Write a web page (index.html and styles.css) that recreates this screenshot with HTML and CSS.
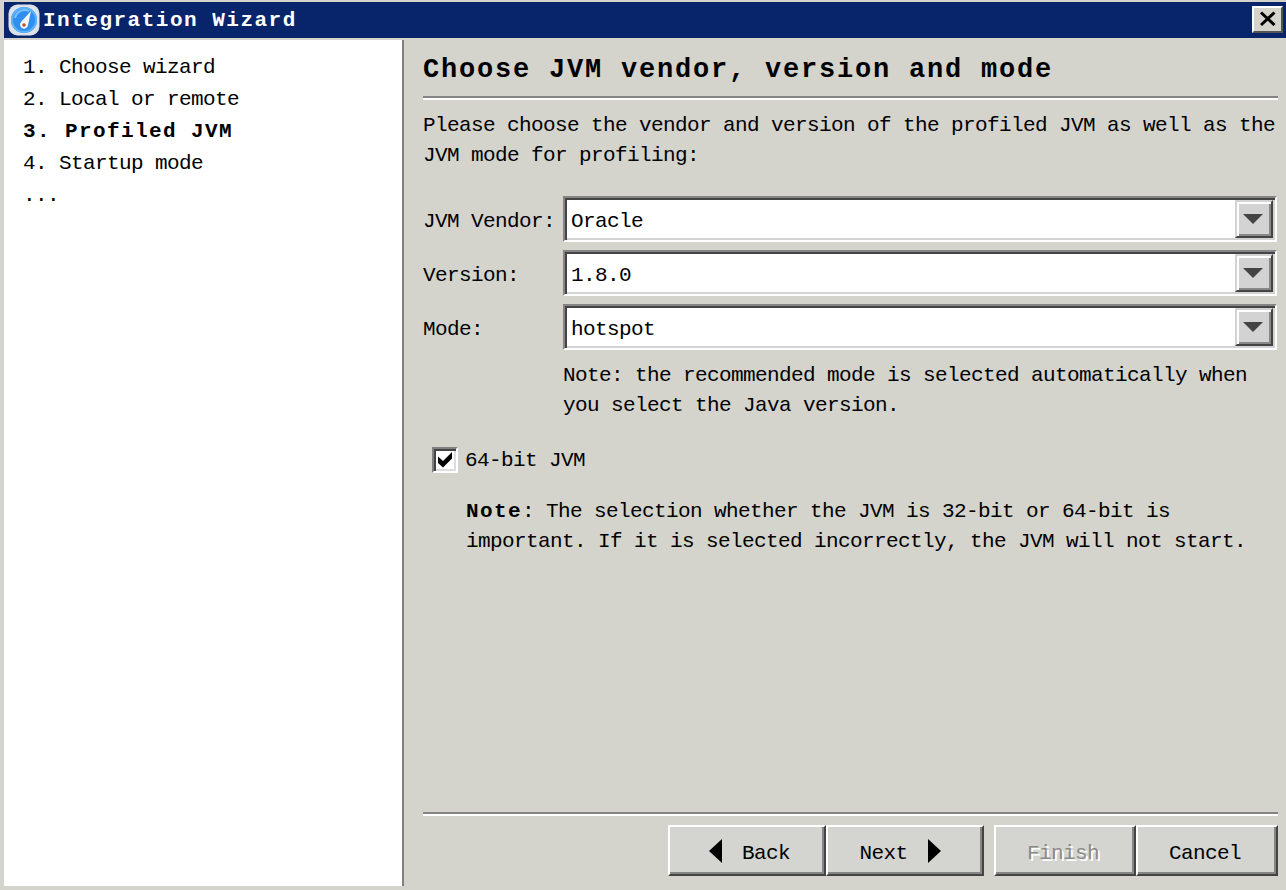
FILE: index.html
```html
<!DOCTYPE html>
<html lang="en">
<head>
<meta charset="utf-8">
<title>Integration Wizard</title>
<link rel="stylesheet" href="styles.css">
</head>
<body>
<div class="window">
  <header class="titlebar">
    <svg class="app-icon" width="32" height="32" viewBox="0 0 32 32">
      <rect x="0.500" y="0.500" width="31" height="31" rx="9" fill="#dce3ea"/>
      <circle cx="16" cy="16" r="13" fill="#2f8ff0"/>
      <circle cx="16" cy="16" r="12" fill="none" stroke="#5cb1fa" stroke-width="2"/>
      <path d="M7 14a10 10 0 0 1 14-7" fill="none" stroke="#7cc2fc" stroke-width="2"/>
      <path d="M23 7L20 21a4 4 0 1 1-7-3z" fill="#f6f6f4"/>
      <circle cx="16" cy="21" r="1.800" fill="#b95431"/>
    </svg>
    <h1 class="title bold">Integration Wizard</h1>
    <button class="close" aria-label="Close">
      <svg width="18" height="16" viewBox="0 0 18 16"><path d="M2 1.500L15.500 14M15.500 1.500L2 14" stroke="#000" stroke-width="3"/></svg>
    </button>
  </header>
  <div class="body">
    <nav class="steps">
      <div class="step">1. Choose wizard</div>
      <div class="step">2. Local or remote</div>
      <div class="step bold">3. Profiled JVM</div>
      <div class="step">4. Startup mode</div>
      <div class="step">...</div>
    </nav>
    <main class="content">
      <h2 class="heading">Choose JVM vendor, version and mode</h2>
      <div class="rule"></div>
      <p class="intro">Please choose the vendor and version of the profiled JVM as well as the<br>JVM mode for profiling:</p>
      <div class="form">
        <span class="label">JVM Vendor:</span>
        <div class="combo"><span class="value">Oracle</span><span class="arrow"><svg width="20" height="10" viewBox="0 0 20 10"><path d="M0 0H20L10 10z" fill="#444"/></svg></span></div>
        <span class="label">Version:</span>
        <div class="combo"><span class="value">1.8.0</span><span class="arrow"><svg width="20" height="10" viewBox="0 0 20 10"><path d="M0 0H20L10 10z" fill="#444"/></svg></span></div>
        <span class="label">Mode:</span>
        <div class="combo"><span class="value">hotspot</span><span class="arrow"><svg width="20" height="10" viewBox="0 0 20 10"><path d="M0 0H20L10 10z" fill="#444"/></svg></span></div>
      </div>
      <p class="mode-note">Note: the recommended mode is selected automatically when<br>you select the Java version.</p>
      <div class="check">
        <span class="box"><svg width="16" height="16" viewBox="0 0 16 16"><path d="M1 4.500L6 9L15 0V6.500L6 15.500L1 11z" fill="#000"/></svg></span>
        <span>64-bit JVM</span>
      </div>
      <p class="bit-note"><b class="bold">Note</b>: The selection whether the JVM is 32-bit or 64-bit is<br>important. If it is selected incorrectly, the JVM will not start.</p>
      <footer class="footer">
        <div class="rule"></div>
        <div class="buttons">
          <button class="btn nav-btn back"><svg width="14" height="24" viewBox="0 0 14 24"><path d="M13 0V24L0 12z"/></svg>Back</button>
          <button class="btn nav-btn next">Next<svg width="14" height="24" viewBox="0 0 14 24"><path d="M1 0V24L14 12z"/></svg></button>
          <button class="btn finish" disabled>Finish</button>
          <button class="btn cancel">Cancel</button>
        </div>
      </footer>
    </main>
  </div>
</div>
</body>
</html>
```
FILE: styles.css
```css
* { box-sizing: border-box; }
body {
  margin: 0;
  background: #d4d4cd;
  color: #000;
  font-family: "Liberation Mono", monospace;
  font-size: 21px;
  letter-spacing: -0.602px;
  line-height: 30px;
}
h1, h2, p { margin: 0; }
button { font: inherit; letter-spacing: inherit; color: inherit; border-radius: 0; padding: 0; }
.bold { font-weight: bold; letter-spacing: 1.398px; }
.window { width: 1286px; height: 890px; padding: 2px 0 4px 4px; display: flex; flex-direction: column; overflow: hidden; }
.titlebar { height: 36px; flex: none; background: #08246b; display: flex; align-items: center; padding: 0 3px 0 4px; }
.app-icon { flex: none; }
.title { flex: 1; color: #fff; font-size: 21px; letter-spacing: 1.498px; line-height: 32px; padding-top: 2px; margin-left: 3px; }
.close {
  width: 31px; height: 27px; margin-bottom: 2px;
  display: flex; align-items: center; justify-content: center;
  background: #d4d4cd;
  border: 2px solid; border-color: #fff #555 #555 #fff;
}
.body { flex: 1; display: flex; margin-top: 2px; min-height: 0; }
.steps { width: 400px; flex: none; background: #fff; border-right: 2px solid #808080; padding: 11px 0 0 19px; }
.step { height: 32px; line-height: 33px; white-space: pre; }
.content { flex: 1; display: flex; flex-direction: column; padding: 12px 8px 0 19px; white-space: nowrap; }
.heading { height: 44px; line-height: 37px; font-size: 27px; letter-spacing: 1.797px; }
.rule { height: 4px; flex: none; border-top: 2px solid #848484; border-bottom: 2px solid #fff; }
.intro { margin-top: 11px; }
.form { display: grid; grid-template-columns: 140px 714px; grid-auto-rows: 46px; row-gap: 8px; margin-top: 25px; }
.label { line-height: 51px; }
.combo {
  display: flex; background: #fff;
  border: 2px solid; border-color: #858585 #fff #fff #858585;
  box-shadow: inset 2px 2px #444, inset -2px -2px #d3d3d3;
  padding: 2px;
}
.value { flex: 1; padding-left: 4px; line-height: 43px; }
.arrow {
  width: 38px; height: 38px; display: flex; align-items: center; justify-content: center;
  background: #d3d3d3;
  border: 2px solid; border-color: #d3d3d3 #444 #444 #d3d3d3;
  box-shadow: inset 2px 2px #fff, inset -2px -2px #888;
  padding-right: 2px;
}
.mode-note { margin: 11px 0 0 140px; }
.check { display: flex; align-items: center; height: 30px; margin: 25px 0 0 9px; gap: 7px; }
.box {
  width: 26px; height: 26px; display: flex; align-items: center; justify-content: center;
  background: #fff; border: 2px solid; border-color: #808080 #fff #fff #808080;
  box-shadow: inset 2px 2px #444, inset -2px -2px #ddd; margin-bottom: 3px;
}
.bit-note { margin: 21px 0 0 43px; }
.footer { margin-top: auto; padding-bottom: 10px; }
.buttons { display: flex; justify-content: flex-end; margin-top: 9px; }
.btn {
  width: 142px; height: 51px; display: flex; align-items: center; justify-content: center;
  background: #d4d4d1; border: 2px solid; border-color: #fff #444 #444 #fff;
  box-shadow: inset -2px -2px #858585; padding-top: 6px;
}
.nav-btn { width: 158px; gap: 19px; }
.nav-btn svg { margin-bottom: 5px; }
.back { padding-left: 5px; }
.next { margin-right: 10px; gap: 19px; padding-right: 10px; }
.finish { color: #8b8b88; text-shadow: 2px 2px #fff; padding-right: 4px; }
.cancel { padding-right: 4px; }
```
